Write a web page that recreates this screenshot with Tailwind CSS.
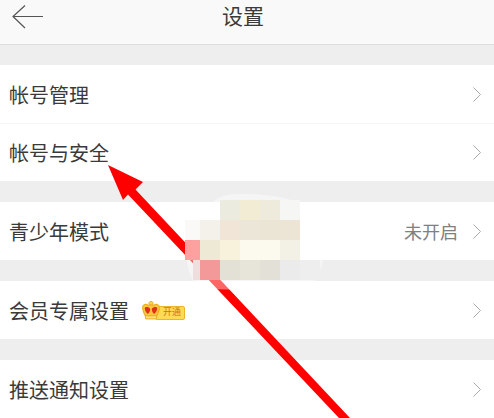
<!DOCTYPE html>
<html>
<head>
<meta charset="utf-8">
<script src="https://cdn.jsdelivr.net/npm/@tailwindcss/browser@4"></script>
</head>
<body class="m-0">
<div class="relative w-[494px] h-[418px] overflow-hidden bg-[#eeeeee] text-[#3a3a3a] font-['Liberation_Sans','Noto_Sans_CJK_SC',sans-serif]">
  <header class="flex items-center h-[45px] pl-[12px] bg-[#f9f9f9] border-b border-[#dedede]">
    <svg class="w-[31px] h-[24px] mb-[10px] shrink-0" viewBox="0 0 31 24" fill="none" stroke="#555555" stroke-width="1.2">
      <path d="M31 11.5H1M13 0.5L1 11.5L13 23"/>
    </svg>
    <h1 class="ml-[179px] mb-[12px] text-[21px] leading-none font-normal">设置</h1>
  </header>

  <section class="mt-[20px] bg-white">
    <div class="flex items-center h-[59px] pl-[9px] pr-[13px] border-b border-[#f5f5f5]">
      <span class="pt-[3px] text-[20px] leading-none">帐号管理</span>
      <svg class="ml-auto w-[8px] h-[15px]" viewBox="0 0 8 15" fill="none" stroke="#aaaaaa" stroke-width="1"><path d="M0.5 0.5L7.5 7.5L0.5 14.5"/></svg>
    </div>
    <div class="flex items-center h-[57px] pl-[9px] pr-[13px]">
      <span class="pt-[3px] text-[20px] leading-none">帐号与安全</span>
      <svg class="ml-auto w-[8px] h-[15px]" viewBox="0 0 8 15" fill="none" stroke="#aaaaaa" stroke-width="1"><path d="M0.5 0.5L7.5 7.5L0.5 14.5"/></svg>
    </div>
  </section>

  <section class="mt-[21px] bg-white">
    <div class="flex items-center h-[58px] pl-[9px] pr-[13px]">
      <span class="pt-[3px] text-[20px] leading-none">青少年模式</span>
      <span class="ml-auto mr-[15px] pt-[3px] text-[18px] leading-none text-[#808080]">未开启</span>
      <svg class="w-[8px] h-[15px]" viewBox="0 0 8 15" fill="none" stroke="#aaaaaa" stroke-width="1"><path d="M0.5 0.5L7.5 7.5L0.5 14.5"/></svg>
    </div>
  </section>

  <section class="mt-[21px] bg-white">
    <div class="flex items-center h-[58px] pl-[9px] pr-[13px]">
      <span class="pt-[3px] text-[20px] leading-none">会员专属设置</span>
      <span class="relative flex items-center ml-[13px] h-[19px] w-[43px]">
        <span class="absolute right-0 bottom-0 flex items-center justify-end pr-[3px] w-[30px] h-[14px] rounded-[2px] bg-[#ffdb55] border border-[#efb52a] text-[9px] leading-none text-[#d9701a]">开通</span>
        <svg class="absolute left-0 top-0 w-[18px] h-[19px]" viewBox="0 0 17 18">
          <circle cx="8.5" cy="2.5" r="2" fill="#f8d560" stroke="#e8a820" stroke-width="0.9"/>
          <path d="M0.6 6C0.6 3 4 2.5 6 4.2L8.5 3.5L11 4.2C13 2.5 16.4 3 16.4 6C16.6 9 15 11.5 14 14H3C2 11.5 0.4 9 0.6 6Z" fill="#f9c93a" stroke="#eeaa22" stroke-width="1"/>
          <path d="M2.6 7C2.6 5.2 6.6 5.2 7.8 7.5C7.8 10 6.2 11.5 5.6 12.2C4 11 2.6 9 2.6 7ZM14.4 7C14.4 5.2 10.4 5.2 9.2 7.5C9.2 10 10.8 11.5 11.4 12.2C13 11 14.4 9 14.4 7Z" fill="#dd3318"/>
          <path d="M3 14H14L13.5 17H3.5Z" fill="#fbe27a" stroke="#eeaa22" stroke-width="0.9"/>
        </svg>
      </span>
      <svg class="ml-auto w-[8px] h-[15px]" viewBox="0 0 8 15" fill="none" stroke="#aaaaaa" stroke-width="1"><path d="M0.5 0.5L7.5 7.5L0.5 14.5"/></svg>
    </div>
  </section>

  <section class="mt-[21px] bg-white border-b border-[#f5f5f5]">
    <div class="flex items-center h-[58px] pl-[9px] pr-[13px]">
      <span class="pt-[3px] text-[20px] leading-none">推送通知设置</span>
      <svg class="ml-auto w-[8px] h-[15px]" viewBox="0 0 8 15" fill="none" stroke="#aaaaaa" stroke-width="1"><path d="M0.5 0.5L7.5 7.5L0.5 14.5"/></svg>
    </div>
  </section>

  <svg class="absolute left-0 top-0 w-[494px] h-[418px] pointer-events-none" viewBox="0 0 494 418" shape-rendering="crispEdges">
    <g shape-rendering="auto">
      <path d="M108 165L143 182L135.5 189.5L350 418L339 418L128 194.5L123 200Z" fill="#ff0000"/>
      <path d="M186 240C186 225 195 219 205 219C208 205 215 194 238 194C268 193 310 198 322 222C332 245 322 262 320 272C316 285 302 292 290 291L205 289C192 286 185 270 186 240Z" fill="#ffffff" fill-opacity="0.4"/>
    </g>
    <rect x="220" y="200" width="20" height="20" fill="#ecebdf"/>
    <rect x="240" y="200" width="20" height="20" fill="#f2ecd4"/>
    <rect x="260" y="200" width="20" height="20" fill="#efebdc"/>
    <rect x="280" y="200" width="20" height="20" fill="#f6f6f5"/>
    <rect x="185" y="220" width="15" height="20" fill="#faf9f8"/>
    <rect x="200" y="220" width="20" height="20" fill="#f3f1ea"/>
    <rect x="220" y="220" width="20" height="20" fill="#f1e5d8"/>
    <rect x="240" y="220" width="20" height="20" fill="#ebe6d7"/>
    <rect x="260" y="220" width="20" height="20" fill="#ebe5d6"/>
    <rect x="280" y="220" width="20" height="20" fill="#ece4d4"/>
    <rect x="185" y="240" width="15" height="20" fill="#fda0a0"/>
    <rect x="200" y="240" width="20" height="20" fill="#eee9d5"/>
    <rect x="220" y="240" width="20" height="20" fill="#f8f2dc"/>
    <rect x="240" y="240" width="40" height="20" fill="#fcfaef"/>
    <rect x="280" y="240" width="20" height="20" fill="#f3f1e6"/>
    <rect x="193" y="260" width="7" height="20" fill="#eedede"/>
    <rect x="200" y="260" width="20" height="20" fill="#f49999"/>
    <rect x="220" y="260" width="20" height="20" fill="#e3e0d6"/>
    <rect x="240" y="260" width="20" height="20" fill="#e7e5da"/>
    <rect x="260" y="260" width="20" height="20" fill="#e3e0d8"/>
    <rect x="280" y="260" width="20" height="20" fill="#ebebeb"/>
    <rect x="300" y="260" width="20" height="20" fill="#eeeeee"/>
  </svg>
</div>
</body>
</html>
